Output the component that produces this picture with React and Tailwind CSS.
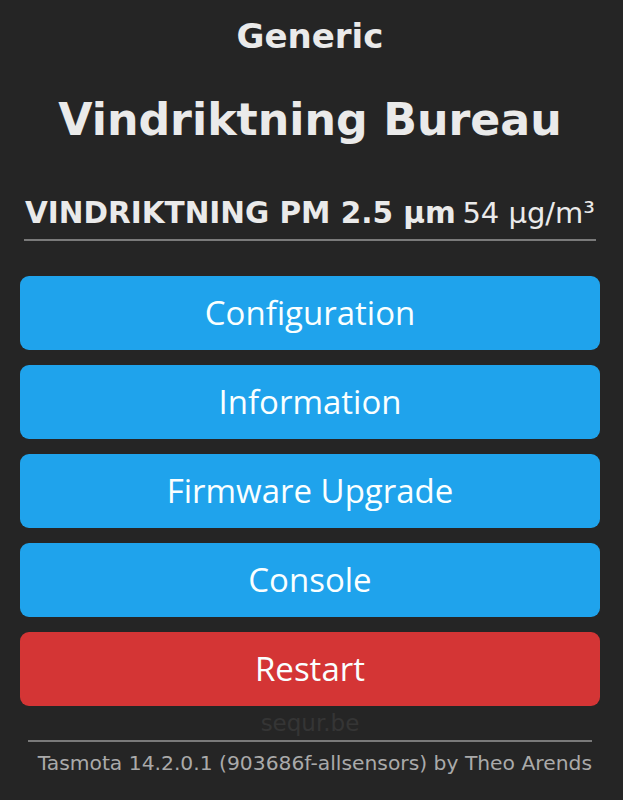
const buttons = [
    { label: 'Configuration', red: false },
    { label: 'Information', red: false },
    { label: 'Firmware Upgrade', red: false },
    { label: 'Console', red: false },
    { label: 'Restart', red: true },
]

export default function App() {
    return (
        <div className="min-h-screen bg-[#252525] text-[#eaeaea] font-['DejaVu_Sans',sans-serif]">
            <div className="ml-[20px] w-[580px] pt-[16px]">
                <h3 className="text-center text-[34px] font-bold leading-[40px]">Generic</h3>
                <h2 className="mt-[39px] text-center text-[44.3px] font-bold leading-[50px]">Vindriktning Bureau</h2>

                <div className="mt-[50px] flex items-center px-[5px] leading-[36px] whitespace-nowrap">
                    <span className="flex-1 text-[29.5px] font-bold">VINDRIKTNING PM 2.5 µm</span>
                    <span className="text-[29px]">54 µg/m³</span>
                </div>
                <div className="mx-[4px] mt-[8px] h-[2px] bg-[#7a7a7a]" />

                <div className="mt-[35px] flex flex-col gap-[15px]">
                    {buttons.map(b => (
                        <button
                            key={b.label}
                            className={`h-[74px] w-full rounded-[9px] text-[33px] text-[#faffff] font-['Open_Sans',sans-serif] ${b.red ? 'bg-[#d43535]' : 'bg-[#1fa3ec]'}`}
                        >
                            {b.label}
                        </button>
                    ))}
                </div>

                <div className="mt-[2px] text-center text-[23px] leading-[30px] text-[#353535]">sequr.be</div>
                <div className="mx-[8px] mt-[2px] h-[2px] bg-[#7a7a7a]" />
                <div className="mt-[8px] text-right pr-[8px] text-[20.3px] leading-[26px] text-[#aaaaaa]">
                    Tasmota 14.2.0.1 (903686f-allsensors) by Theo Arends
                </div>
            </div>
        </div>
    )
}
